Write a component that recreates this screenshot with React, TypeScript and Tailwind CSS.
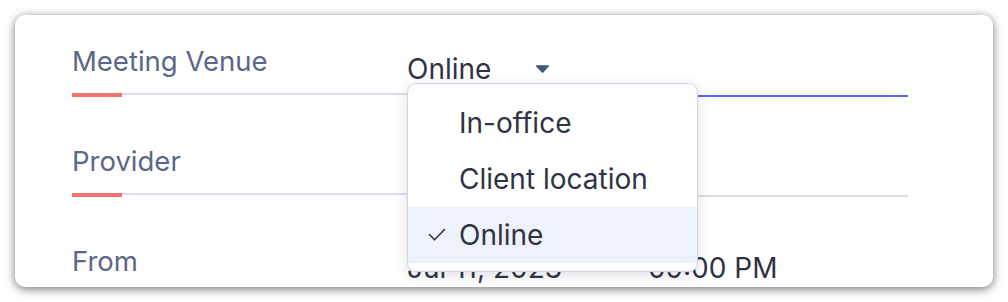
import { useState } from 'react';

const options = ['In-office', 'Client location', 'Online'];

function Caret() {
    return (
        <svg width="15" height="10" viewBox="0 0 15 10" className="text-[#3d5a77]">
            <path
                d="M1.5 1.2 H13.5 Q14.6 1.2 13.9 2.2 L8.3 8.6 Q7.5 9.4 6.7 8.6 L1.1 2.2 Q0.4 1.2 1.5 1.2 Z"
                fill="currentColor"
            />
        </svg>
    );
}

function CheckMark() {
    return (
        <svg width="18" height="14" viewBox="0 0 18 14" fill="none">
            <path
                d="M1.5 6.5 L6.5 11.8 L16.5 1.5"
                stroke="#2f3444"
                strokeWidth="1.6"
                strokeLinecap="round"
                strokeLinejoin="round"
            />
        </svg>
    );
}

function LabelLine() {
    return (
        <div className="flex items-start">
            <div className="h-[4px] w-[50px] bg-[#f1736f]" />
            <div className="h-[2px] flex-1 bg-[#dddbec]" />
        </div>
    );
}

function Row({
    label,
    height,
    focused,
    children,
}: {
    label: string;
    height: string;
    focused?: boolean;
    children?: React.ReactNode;
}) {
    return (
        <div className="grid grid-cols-[335px_1fr]">
            <div className={`flex flex-col justify-end ${height}`}>
                <div className="pb-[16px] text-[27.5px] leading-[32px] text-[#5b6787]">
                    {label}
                </div>
                <LabelLine />
            </div>
            <div className={`relative flex flex-col justify-end ${height}`}>
                {children}
                <div
                    className={`h-[2px] ${focused ? 'bg-[#5468e8]' : 'bg-[#dddbec]'}`}
                />
            </div>
        </div>
    );
}

export default function App() {
    const [venue, setVenue] = useState('Online');

    return (
        <div
            className="h-[302px] w-[1008px] bg-white p-[15px]"
            style={{ fontFamily: 'Inter, "Noto Sans", sans-serif' }}
        >
            <div className="h-[272px] overflow-hidden rounded-[10px] bg-white pl-[57px] pr-[85px] shadow-[0_2px_10px_rgba(0,0,0,0.55)]">
                <Row label="Meeting Venue" height="h-[82px]" focused>
                    <div className="flex items-center pb-[10px] text-[28px] leading-[32px] text-[#2f3444]">
                        <span className="w-[128px]">{venue}</span>
                        <Caret />
                    </div>
                    <div className="absolute left-0 top-[68px] z-10 w-[291px] rounded-[9px] border-[1.5px] border-[#d3d3e6] bg-white pb-[8px] pt-[11px] shadow-[0_3px_14px_rgba(40,40,80,0.14)]">
                        {options.map((o) => {
                            const selected = o === venue;
                            return (
                                <div
                                    key={o}
                                    onClick={() => setVenue(o)}
                                    className={`flex h-[56px] items-center text-[28px] leading-[32px] text-[#2f3444] ${
                                        selected ? 'bg-[#eef2fb]' : ''
                                    }`}
                                >
                                    <div className="flex w-[51px] justify-end pr-[13px]">
                                        {selected && <CheckMark />}
                                    </div>
                                    {o}
                                </div>
                            );
                        })}
                    </div>
                </Row>
                <Row label="Provider" height="h-[100px]" />
                <Row label="From" height="h-[100px]">
                    <div className="flex pb-[11px] text-[28px] leading-[32px] text-[#2f3444]">
                        <span className="w-[241px]">Jul 11, 2023</span>
                        <span>09:00 PM</span>
                    </div>
                </Row>
            </div>
        </div>
    );
}
